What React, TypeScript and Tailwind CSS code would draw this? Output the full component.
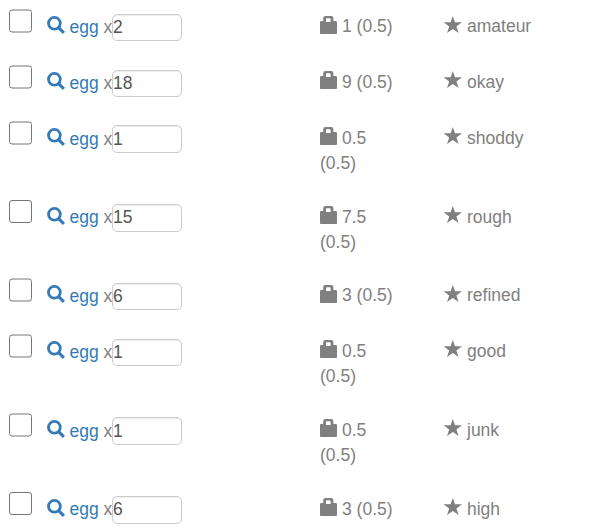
type Item = {
  qty: string;
  weight: string;
  quality: string;
  row: string;
  box: string;
  label: string;
  field: string;
  icon: string;
};

// Vertical rounding variants for the icons, checkboxes, labels and text fields.
const ICON = "top-0";
const ICON_UP = "-top-px";
const BOX = "translate-y-[0.5px]";
const BOX_SHARP = "translate-y-0";
const LABEL = "mt-[2px]";
const LABEL_UP = "mt-[1px]";
const FIELD = "mt-[1px] h-[27px]";
const FIELD_TALL = "mt-0 h-[28px] pt-[1px]";
const FIELD_TALL_UP = "mt-0 h-[28px] pb-[1px]";

const items: Item[] = [
  { qty: "2", weight: "1", quality: "amateur", row: "h-[56px]", box: BOX, label: LABEL, field: FIELD, icon: ICON },
  { qty: "18", weight: "9", quality: "okay", row: "h-[56px]", box: BOX, label: LABEL, field: FIELD, icon: ICON_UP },
  { qty: "1", weight: "0.5", quality: "shoddy", row: "h-[79px]", box: BOX, label: LABEL, field: FIELD_TALL, icon: ICON_UP },
  { qty: "15", weight: "7.5", quality: "rough", row: "h-[78px]", box: BOX_SHARP, label: LABEL_UP, field: FIELD_TALL_UP, icon: ICON_UP },
  { qty: "6", weight: "3", quality: "refined", row: "h-[56px]", box: BOX, label: LABEL, field: FIELD, icon: ICON },
  { qty: "1", weight: "0.5", quality: "good", row: "h-[79px]", box: BOX, label: LABEL, field: FIELD, icon: ICON_UP },
  { qty: "1", weight: "0.5", quality: "junk", row: "h-[79px]", box: BOX, label: LABEL, field: FIELD_TALL, icon: ICON_UP },
  { qty: "6", weight: "3", quality: "high", row: "h-[56px]", box: BOX_SHARP, label: LABEL_UP, field: FIELD_TALL_UP, icon: ICON_UP },
];

function SearchIcon() {
  return (
    <svg className="mt-[3px] mr-[4.5px] h-[18px] w-[18px] shrink-0" viewBox="0 0 18 18" fill="none" stroke="#337ab7">
      <circle cx="7.4" cy="7.3" r="5.9" strokeWidth="2.8" />
      <path d="M11.4 11.4 16.9 16.9" strokeWidth="3" />
    </svg>
  );
}

function BagIcon({ shift }: { shift: string }) {
  return (
    <svg className={`relative mr-[5px] inline-block h-[18px] w-[17px] align-[-2px] ${shift}`} viewBox="0 0 17 18" fill="#808080">
      <path
        fillRule="evenodd"
        d="M3.2 5V2.2Q3.2 0 5.4 0H11.2Q13.4 0 13.4 2.2V5H15.8Q17 5 17 6.2V17.2Q17 18 16.2 18H.8Q0 18 0 17.2V6.2Q0 5 1.2 5ZM6 6H10.6V3Q10.6 2.2 9.8 2.2H6.8Q6 2.2 6 3Z"
      />
    </svg>
  );
}

function StarIcon({ shift }: { shift: string }) {
  return (
    <svg className={`relative mt-[2px] mr-[5px] h-[18px] w-[18px] shrink-0 overflow-visible ${shift}`} viewBox="0 0 18 18" fill="#808080">
      <path d="M8.8 0 11 6.3H18L12.4 10.4 14.6 17 8.8 12.9 3 17 5.2 10.4-.4 6.3H6.6Z" />
    </svg>
  );
}

export default function App() {
  return (
    <main className="h-[527px] w-[590px] overflow-hidden bg-white font-['Liberation_Sans',Arial,sans-serif] text-[17.5px] leading-[25px] text-[#808080]">
      {items.map((item, i) => (
        <div key={i} className={`flex items-start ${item.row}`}>
          <input
            type="checkbox"
            aria-label={`Select ${item.quality} egg`}
            className={`mt-[9px] ml-[9px] h-[23px] w-[23px] shrink-0 appearance-none rounded-[3px] border border-[#767676] bg-white ${item.box}`}
          />
          <div className="ml-[15px] flex w-[273px] items-start pt-[13px]">
            <SearchIcon />
            <a className={`w-[29.5px] text-[#337ab7] ${item.label}`}>egg</a>
            <span className={`ml-[4.5px] w-[8.5px] ${item.label}`}>x</span>
            <input
              type="text"
              aria-label="Quantity"
              defaultValue={item.qty}
              className={`w-[70px] rounded-[5px] border border-[#ccc] bg-white text-[#555] shadow-[inset_0_1px_1px_rgba(0,0,0,0.075)] ${item.field}`}
            />
          </div>
          <div className="w-[80px] pt-[14px]">
            <BagIcon shift={item.icon} />
            {item.weight} (0.5)
          </div>
          <div className="ml-[44px] flex items-start pt-[14px]">
            <StarIcon shift={item.icon} />
            <span>{item.quality}</span>
          </div>
        </div>
      ))}
    </main>
  );
}
